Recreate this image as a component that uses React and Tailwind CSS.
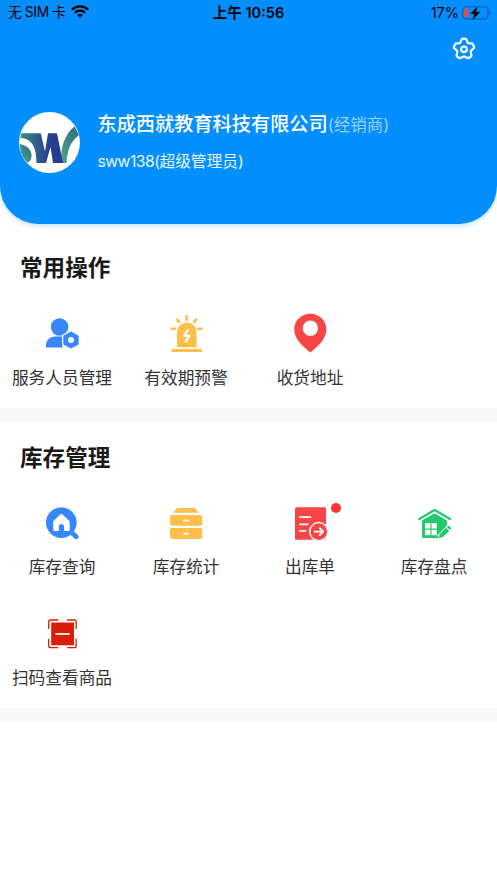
import React from "react";

const StaffIcon = () => (
  <svg className="w-10 h-10" viewBox="0 0 40 40" fill="#3887fa">
    <circle cx="17.6" cy="14" r="8.8" />
    <path d="M4 34.5V32.2a8.6 8.6 0 0 1 8.6-8.6H20.5V34.5Z" />
    <path d="M29 18.4l7.7 4.4v8.6L29 35.6l-7.7-4.2v-8.6Z" stroke="#fff" strokeWidth="2.4" paintOrder="stroke" strokeLinejoin="round" />
    <circle cx="29" cy="27" r="2.9" fill="#fff" />
  </svg>
);

const AlarmIcon = () => (
  <svg className="w-10 h-10" viewBox="0 0 40 40" fill="#fdbf4a">
    <path d="M11 19.3a9.8 9.8 0 0 1 19.6 0v13.5a1.5 1.5 0 0 1-1.5 1.5H12.5a1.5 1.5 0 0 1-1.5-1.5Z" />
    <rect x="5.4" y="36" width="30.6" height="3" rx="1" />
    <path d="M20.7 3.3v3.4M11.3 6.8l1.9 2M30.1 6.8L28.2 8.8M5.9 15.8h3M32.5 15.8h3" stroke="#fdbf4a" strokeWidth="2.8" strokeLinecap="round" />
    <path d="M21.8 17.2L18.2 22.8H23.4L19.8 28.4" fill="none" stroke="#fff" strokeWidth="2.3" strokeLinecap="round" strokeLinejoin="round" />
  </svg>
);

const PinIcon = () => (
  <svg className="w-10 h-10" viewBox="0 0 40 40" fill="#f84646">
    <path fillRule="evenodd" d="M20.2.8C11.3.8 4.2 7.7 4.2 16.400c0 9.400 9 17.400 16.200 23 7.100-5.600 16-13.600 16-23C36.400 7.700 29.100.8 20.200.8ZM20.400 7.500a7.700 7.700 0 1 1 0 15.400 7.700 7.700 0 0 1 0-15.400Z" />
  </svg>
);

const SearchHouseIcon = () => (
  <svg className="w-10 h-10" viewBox="0 0 40 40" fill="#3887fa">
    <path d="M28.5 28.5l5.7 5.2" stroke="#3887fa" strokeWidth="4.8" strokeLinecap="round" />
    <circle cx="19.3" cy="19.6" r="15.3" />
    <path d="M18.3 11.3a1.5 1.5 0 0 1 2 0l6.6 6.2a2.5 2.5 0 0 1 .8 1.8v7.2a1.6 1.6 0 0 1-1.6 1.6H22v-4.6a2.6 2.6 0 0 0-5.2 0v4.6h-4a1.6 1.6 0 0 1-1.6-1.6v-7.2a2.5 2.5 0 0 1 .8-1.8Z" fill="#fff" />
  </svg>
);

const DrawersIcon = () => (
  <svg className="w-10 h-10" viewBox="0 0 40 40" fill="#fdbf4a">
    <path d="M7.3 9.7l3.3-3.9a2.2 2.2 0 0 1 1.7-.8h15.4a2.2 2.2 0 0 1 1.7.8l3.3 3.9Z" />
    <rect x="4" y="12" width="32.2" height="10.8" rx="1.8" />
    <rect x="4" y="25.1" width="32.2" height="10.8" rx="1.8" />
    <path d="M18.2 17.5h4M18.2 30.7h4" stroke="#fff" strokeWidth="1.9" strokeLinecap="round" />
  </svg>
);

const OutboundIcon = () => (
  <svg className="w-10 h-10" viewBox="0 0 40 40" fill="none" strokeLinecap="round" strokeLinejoin="round">
    <rect x="5" y="4.2" width="31" height="32.5" rx="1.5" fill="#f84646" />
    <path d="M10 14.2h10.5M10 21.3h7.6M10 27.8h5.6" stroke="#fff" strokeWidth="1.7" />
    <circle cx="28.8" cy="28.6" r="9.8" fill="#fff" />
    <circle cx="28.8" cy="28.6" r="8.4" fill="#f84646" />
    <path d="M24.6 28.6h8.4M29.8 25.2l3.4 3.4-3.4 3.4" stroke="#fff" strokeWidth="1.9" />
  </svg>
);

const StocktakeIcon = () => (
  <svg className="w-10 h-10" viewBox="0 0 40 40" fill="none">
    <path d="M5.2 16L20.6 7l15.4 9" stroke="#22ca6d" strokeWidth="2.2" strokeLinecap="round" strokeLinejoin="round" />
    <path d="M8 17.4l12.6-7.2 12.3 7.2V24l-8.5 8.5V35H9a1 1 0 0 1-1-1Z" fill="#22ca6d" />
    <path d="M11 20h5.3v5.5H11ZM17.5 20h5.3v5.5h-5.3ZM11 26.7h5.3v5.5H11ZM17.5 26.7h5.3v5.5h-5.3Z" fill="#fff" />
    <path d="M25 34.7l9.6-9.6" stroke="#fff" strokeWidth="5.6" />
    <path d="M24.9 35l.7-3.9 6.5-6.3 3.1 3.1-6.5 6.4ZM32.9 24.1l1-1a1 1 0 0 1 1.4 0l1.5 1.5a1 1 0 0 1 0 1.4l-.9 1Z" fill="#22ca6d" />
  </svg>
);

const ScanIcon = () => (
  <svg className="w-10 h-10" viewBox="0 0 40 40" fill="none">
    <rect x="9.2" y="8.5" width="22.8" height="22.8" fill="#d81e06" />
    <path d="M13.5 20h14.2" stroke="#fff" strokeWidth="1.7" />
    <path d="M6.7 15V8a2 2 0 0 1 2-2H16M25 6h7.2a2 2 0 0 1 2 2v7M34.2 24.7v7a2 2 0 0 1-2 2H25M16 33.7H8.7a2 2 0 0 1-2-2v-7" stroke="#d81e06" strokeWidth="1.3" />
  </svg>
);

const Logo = () => (
  <svg className="w-[61px] h-[61px] rounded-full bg-white shrink-0" viewBox="0 0 61 61">
    <defs>
      <linearGradient id="w" x1="0" x2="1">
        <stop offset="0" stopColor="#3a8c86" />
        <stop offset=".65" stopColor="#26418f" />
        <stop offset="1" stopColor="#253a8e" />
      </linearGradient>
      <linearGradient id="leaf" x1="0" y1="1" x2="1" y2="0">
        <stop offset="0" stopColor="#4aa38f" />
        <stop offset="1" stopColor="#2c6c80" />
      </linearGradient>
    </defs>
    <path d="M42.5 51C41 35 46 22 55.500 14.500L60 23C51 30 48.500 38 47.500 51Z" fill="url(#leaf)" />
    <path d="M2 21.300H21.800L26 39.500 29 21.300H38L44 51H34L31.500 35 27 51H17.500C17.500 37 14 26.500 1.500 26Z" fill="url(#w)" />
    <path d="M1 32C8 33.500 12.800 38 12.500 44 12.300 47.500 10.500 50.500 8.500 50.500 4 47 1 41 1 32Z" fill="url(#leaf)" />
  </svg>
);

const StatusBar = () => (
  <div className="grid grid-cols-3 items-center h-[26px] pl-2 pr-[6px] text-black text-[14.5px]">
    <div className="flex items-center">
      <span className="flex gap-[3px] -mt-0.5 text-[13.8px]">
        <span>无</span>
        <span className="tracking-[-0.3px]">SIM</span>
        <span>卡</span>
      </span>
      <svg className="ml-[5.5px] -mt-1 w-[18px] h-[13px]" viewBox="0 0 18 13" fill="none" stroke="#000" strokeWidth="2.3">
        <path d="M.9 4.700a11.500 11.500 0 0 1 16.200 0M3.800 7.800a7.400 7.400 0 0 1 10.400 0" />
        <path d="M9 12.800L6.300 10.100a3.800 3.800 0 0 1 5.400 0Z" fill="#000" stroke="none" />
      </svg>
    </div>
    <span className="-ml-0.5 text-center font-semibold whitespace-nowrap">上午 10:56</span>
    <div className="flex items-center justify-end">
      <span>17%</span>
      <svg className="ml-[3px] w-[29px] h-[14px]" viewBox="0 0 29 14">
        <rect x=".6" y=".8" width="25.4" height="12.2" rx="3.5" fill="none" stroke="#0657a0" strokeWidth="1.1" />
        <path d="M27.3 4.700c1.600.6 1.600 3.800 0 4.400Z" fill="#0657a0" />
        <rect x="2.3" y="2.5" width="3.8" height="8.8" rx="1.3" fill="#fb4436" />
        <path d="M15.7.3L8 8h4.200L10.700 13.700l7.900-8H14Z" fill="#000" />
      </svg>
    </div>
  </div>
);

const common = [
  { label: "服务人员管理", Icon: StaffIcon },
  { label: "有效期预警", Icon: AlarmIcon },
  { label: "收货地址", Icon: PinIcon },
];

const stock = [
  { label: "库存查询", Icon: SearchHouseIcon },
  { label: "库存统计", Icon: DrawersIcon },
  { label: "出库单", Icon: OutboundIcon, dot: true },
  { label: "库存盘点", Icon: StocktakeIcon },
  { label: "扫码查看商品", Icon: ScanIcon },
];

const Section = ({ title, items }) => (
  <section className="pt-[21px] pb-[18px] border-b-[13px] border-[#f9f9f9]">
    <h2 className="pl-5 text-[22.6px] leading-8 font-bold text-[#1a1a1a]">{title}</h2>
    <div className="grid grid-cols-4 gap-y-[34.5px] mt-[29px] pr-px">
      {items.map(({ label, Icon, dot }) => (
        <div key={label} className="flex flex-col items-center">
          <div className="relative">
            <Icon />
            {dot && <span className="absolute left-[41px] top-0 w-[10px] h-[10px] rounded-full bg-[#fa3534]" />}
          </div>
          <span className="mt-[12.5px] h-6 leading-6 text-[16.7px] text-[#333] whitespace-nowrap">{label}</span>
        </div>
      ))}
    </div>
  </section>
);

export default function App() {
  return (
    <div className="w-full min-h-screen bg-white font-['Inter','Noto_Sans_CJK_SC',sans-serif]">
      <header className="h-[224px] rounded-b-[38px] bg-[#058ffe] shadow-[0_2px_5px_rgba(5,143,254,0.25)]">
        <StatusBar />
        <div className="flex justify-end pr-[21px] pt-[11px]">
          <svg className="w-6 h-6" viewBox="0 0 24 24" fill="none" stroke="#fff" strokeWidth="2.1" strokeLinejoin="round">
            <path d="M9.900 1.900Q12 1.300 14.100 1.900L15.900 6.100 20.500 6.600Q22 8.800 22.200 10.700L18.600 14.100 19.500 18.600Q18.300 20.500 16 21.300L12 19.200 8 21.300Q5.700 20.500 4.500 18.600L5.400 14.100 1.800 10.700Q2 8.800 3.500 6.600L8.100 6.100Z" />
            <circle cx="12" cy="12.300" r="2.800" />
          </svg>
        </div>
        <div className="flex items-start pl-[19px] mt-[50.5px]">
          <Logo />
          <div className="ml-[17.5px] -mt-[2px] text-white whitespace-nowrap">
            <div className="leading-7 text-[19.2px] font-medium">
              东成西就教育科技有限公司<span className="text-[16.5px] font-normal text-white/60">(经销商)</span>
            </div>
            <div className="mt-[11px] leading-6 text-[15.7px] text-white/90">
              <span className="tracking-[-0.5px]">sww138(</span>超级管理员)
            </div>
          </div>
        </div>
      </header>
      <main className="pt-[7px]">
        <Section title="常用操作" items={common} />
        <Section title="库存管理" items={stock} />
      </main>
    </div>
  );
}
